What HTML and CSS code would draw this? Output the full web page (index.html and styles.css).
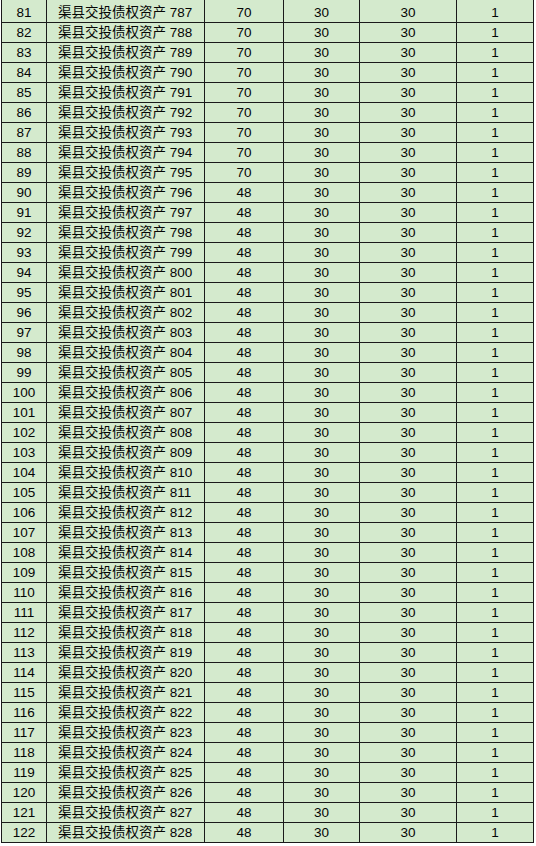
FILE: index.html
```html
<!DOCTYPE html>
<html lang="zh-CN">
<head>
<meta charset="utf-8">
<title>渠县交投债权资产</title>
<link rel="stylesheet" href="styles.css">
</head>
<body>
<table class="sheet">
<tbody>
<tr class="first"><td class="c1">81</td><td class="c2">渠县交投债权资产 787</td><td class="c3">70</td><td class="c4">30</td><td class="c5">30</td><td class="c6">1</td></tr>
<tr><td class="c1">82</td><td class="c2">渠县交投债权资产 788</td><td class="c3">70</td><td class="c4">30</td><td class="c5">30</td><td class="c6">1</td></tr>
<tr><td class="c1">83</td><td class="c2">渠县交投债权资产 789</td><td class="c3">70</td><td class="c4">30</td><td class="c5">30</td><td class="c6">1</td></tr>
<tr><td class="c1">84</td><td class="c2">渠县交投债权资产 790</td><td class="c3">70</td><td class="c4">30</td><td class="c5">30</td><td class="c6">1</td></tr>
<tr><td class="c1">85</td><td class="c2">渠县交投债权资产 791</td><td class="c3">70</td><td class="c4">30</td><td class="c5">30</td><td class="c6">1</td></tr>
<tr><td class="c1">86</td><td class="c2">渠县交投债权资产 792</td><td class="c3">70</td><td class="c4">30</td><td class="c5">30</td><td class="c6">1</td></tr>
<tr><td class="c1">87</td><td class="c2">渠县交投债权资产 793</td><td class="c3">70</td><td class="c4">30</td><td class="c5">30</td><td class="c6">1</td></tr>
<tr><td class="c1">88</td><td class="c2">渠县交投债权资产 794</td><td class="c3">70</td><td class="c4">30</td><td class="c5">30</td><td class="c6">1</td></tr>
<tr><td class="c1">89</td><td class="c2">渠县交投债权资产 795</td><td class="c3">70</td><td class="c4">30</td><td class="c5">30</td><td class="c6">1</td></tr>
<tr><td class="c1">90</td><td class="c2">渠县交投债权资产 796</td><td class="c3">48</td><td class="c4">30</td><td class="c5">30</td><td class="c6">1</td></tr>
<tr><td class="c1">91</td><td class="c2">渠县交投债权资产 797</td><td class="c3">48</td><td class="c4">30</td><td class="c5">30</td><td class="c6">1</td></tr>
<tr><td class="c1">92</td><td class="c2">渠县交投债权资产 798</td><td class="c3">48</td><td class="c4">30</td><td class="c5">30</td><td class="c6">1</td></tr>
<tr><td class="c1">93</td><td class="c2">渠县交投债权资产 799</td><td class="c3">48</td><td class="c4">30</td><td class="c5">30</td><td class="c6">1</td></tr>
<tr><td class="c1">94</td><td class="c2">渠县交投债权资产 800</td><td class="c3">48</td><td class="c4">30</td><td class="c5">30</td><td class="c6">1</td></tr>
<tr><td class="c1">95</td><td class="c2">渠县交投债权资产 801</td><td class="c3">48</td><td class="c4">30</td><td class="c5">30</td><td class="c6">1</td></tr>
<tr><td class="c1">96</td><td class="c2">渠县交投债权资产 802</td><td class="c3">48</td><td class="c4">30</td><td class="c5">30</td><td class="c6">1</td></tr>
<tr><td class="c1">97</td><td class="c2">渠县交投债权资产 803</td><td class="c3">48</td><td class="c4">30</td><td class="c5">30</td><td class="c6">1</td></tr>
<tr><td class="c1">98</td><td class="c2">渠县交投债权资产 804</td><td class="c3">48</td><td class="c4">30</td><td class="c5">30</td><td class="c6">1</td></tr>
<tr><td class="c1">99</td><td class="c2">渠县交投债权资产 805</td><td class="c3">48</td><td class="c4">30</td><td class="c5">30</td><td class="c6">1</td></tr>
<tr><td class="c1">100</td><td class="c2">渠县交投债权资产 806</td><td class="c3">48</td><td class="c4">30</td><td class="c5">30</td><td class="c6">1</td></tr>
<tr><td class="c1">101</td><td class="c2">渠县交投债权资产 807</td><td class="c3">48</td><td class="c4">30</td><td class="c5">30</td><td class="c6">1</td></tr>
<tr><td class="c1">102</td><td class="c2">渠县交投债权资产 808</td><td class="c3">48</td><td class="c4">30</td><td class="c5">30</td><td class="c6">1</td></tr>
<tr><td class="c1">103</td><td class="c2">渠县交投债权资产 809</td><td class="c3">48</td><td class="c4">30</td><td class="c5">30</td><td class="c6">1</td></tr>
<tr><td class="c1">104</td><td class="c2">渠县交投债权资产 810</td><td class="c3">48</td><td class="c4">30</td><td class="c5">30</td><td class="c6">1</td></tr>
<tr><td class="c1">105</td><td class="c2">渠县交投债权资产 811</td><td class="c3">48</td><td class="c4">30</td><td class="c5">30</td><td class="c6">1</td></tr>
<tr><td class="c1">106</td><td class="c2">渠县交投债权资产 812</td><td class="c3">48</td><td class="c4">30</td><td class="c5">30</td><td class="c6">1</td></tr>
<tr><td class="c1">107</td><td class="c2">渠县交投债权资产 813</td><td class="c3">48</td><td class="c4">30</td><td class="c5">30</td><td class="c6">1</td></tr>
<tr><td class="c1">108</td><td class="c2">渠县交投债权资产 814</td><td class="c3">48</td><td class="c4">30</td><td class="c5">30</td><td class="c6">1</td></tr>
<tr><td class="c1">109</td><td class="c2">渠县交投债权资产 815</td><td class="c3">48</td><td class="c4">30</td><td class="c5">30</td><td class="c6">1</td></tr>
<tr><td class="c1">110</td><td class="c2">渠县交投债权资产 816</td><td class="c3">48</td><td class="c4">30</td><td class="c5">30</td><td class="c6">1</td></tr>
<tr><td class="c1">111</td><td class="c2">渠县交投债权资产 817</td><td class="c3">48</td><td class="c4">30</td><td class="c5">30</td><td class="c6">1</td></tr>
<tr><td class="c1">112</td><td class="c2">渠县交投债权资产 818</td><td class="c3">48</td><td class="c4">30</td><td class="c5">30</td><td class="c6">1</td></tr>
<tr><td class="c1">113</td><td class="c2">渠县交投债权资产 819</td><td class="c3">48</td><td class="c4">30</td><td class="c5">30</td><td class="c6">1</td></tr>
<tr><td class="c1">114</td><td class="c2">渠县交投债权资产 820</td><td class="c3">48</td><td class="c4">30</td><td class="c5">30</td><td class="c6">1</td></tr>
<tr><td class="c1">115</td><td class="c2">渠县交投债权资产 821</td><td class="c3">48</td><td class="c4">30</td><td class="c5">30</td><td class="c6">1</td></tr>
<tr><td class="c1">116</td><td class="c2">渠县交投债权资产 822</td><td class="c3">48</td><td class="c4">30</td><td class="c5">30</td><td class="c6">1</td></tr>
<tr><td class="c1">117</td><td class="c2">渠县交投债权资产 823</td><td class="c3">48</td><td class="c4">30</td><td class="c5">30</td><td class="c6">1</td></tr>
<tr><td class="c1">118</td><td class="c2">渠县交投债权资产 824</td><td class="c3">48</td><td class="c4">30</td><td class="c5">30</td><td class="c6">1</td></tr>
<tr><td class="c1">119</td><td class="c2">渠县交投债权资产 825</td><td class="c3">48</td><td class="c4">30</td><td class="c5">30</td><td class="c6">1</td></tr>
<tr><td class="c1">120</td><td class="c2">渠县交投债权资产 826</td><td class="c3">48</td><td class="c4">30</td><td class="c5">30</td><td class="c6">1</td></tr>
<tr><td class="c1">121</td><td class="c2">渠县交投债权资产 827</td><td class="c3">48</td><td class="c4">30</td><td class="c5">30</td><td class="c6">1</td></tr>
<tr><td class="c1">122</td><td class="c2">渠县交投债权资产 828</td><td class="c3">48</td><td class="c4">30</td><td class="c5">30</td><td class="c6">1</td></tr>
</tbody>
</table>
</body>
</html>
```
FILE: styles.css
```css
html, body {
  margin: 0;
  padding: 0;
  background: #ffffff;
}

.sheet {
  margin: 0 0 0 1px;
  border-collapse: separate;
  border-spacing: 0;
  table-layout: fixed;
  width: 533px;
  font-family: "Liberation Sans", "Noto Sans CJK SC", Arial, sans-serif;
  font-size: 13.5px;
  color: #050505;
}

.sheet td {
  box-sizing: border-box;
  height: 20px;
  padding: 0;
  line-height: 19px;
  background: #d4eacd;
  border-right: 1px solid #1a1a1a;
  border-bottom: 1px solid #1a1a1a;
  text-align: center;
  white-space: nowrap;
  overflow: hidden;
  vertical-align: middle;
}

.sheet .first td {
  height: 23px;
  padding-top: 3px;
}

.sheet td.c1 {
  width: 46px;
  border-left: 1px solid #1a1a1a;
}

.sheet td.c2 {
  width: 158px;
  text-align: left;
  padding-left: 11px;
}

.sheet td.c3 { width: 79px; }
.sheet td.c4 { width: 76px; }
.sheet td.c5 { width: 97px; }
.sheet td.c6 { width: 77px; }
```
